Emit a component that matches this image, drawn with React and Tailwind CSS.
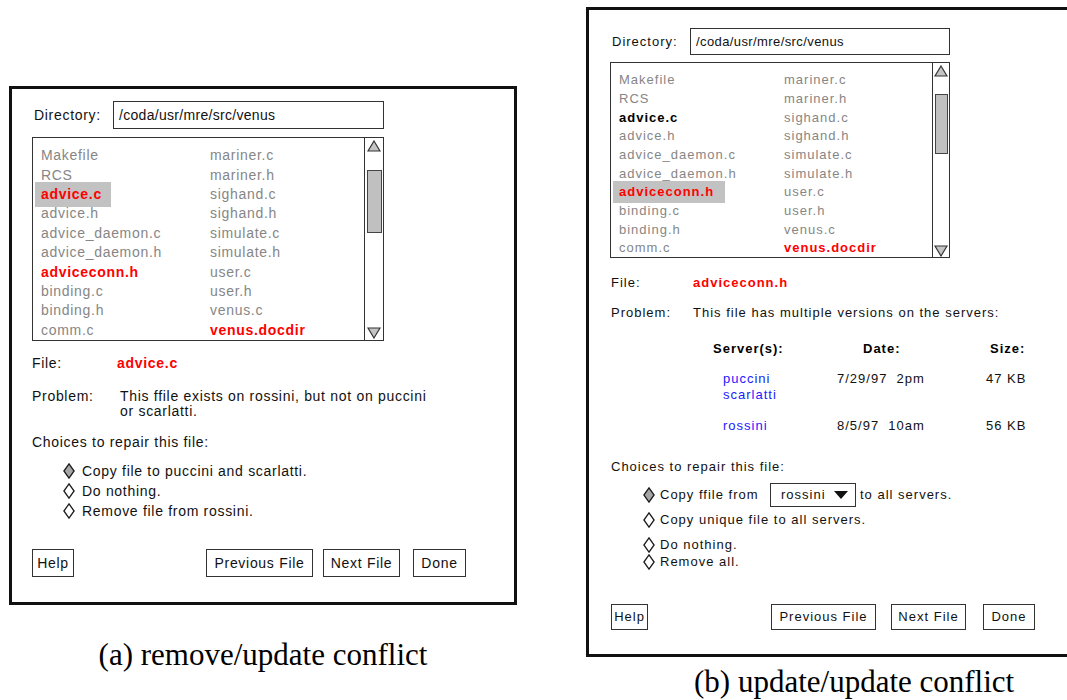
import React from "react";

const col2 = [
  { t: "mariner.c" },
  { t: "mariner.h" },
  { t: "sighand.c" },
  { t: "sighand.h" },
  { t: "simulate.c" },
  { t: "simulate.h" },
  { t: "user.c" },
  { t: "user.h" },
  { t: "venus.c" },
  { t: "venus.docdir", red: true },
];

const colA = [
  { t: "Makefile" },
  { t: "RCS" },
  { t: "advice.c", red: true, hl: true },
  { t: "advice.h" },
  { t: "advice_daemon.c" },
  { t: "advice_daemon.h" },
  { t: "adviceconn.h", red: true },
  { t: "binding.c" },
  { t: "binding.h" },
  { t: "comm.c" },
];

const colB = [
  { t: "Makefile" },
  { t: "RCS" },
  { t: "advice.c", black: true },
  { t: "advice.h" },
  { t: "advice_daemon.c" },
  { t: "advice_daemon.h" },
  { t: "adviceconn.h", red: true, hl: true },
  { t: "binding.c" },
  { t: "binding.h" },
  { t: "comm.c" },
];

function Diamond({ filled }) {
  return (
    <svg width="12" height="16" viewBox="0 0 12 16" className="shrink-0">
      <polygon
        points="6,0.9 11.1,8 6,15.1 0.9,8"
        fill={filled ? "#a6a6a6" : "#ffffff"}
        stroke="#1a1a1a"
        strokeWidth="1.3"
      />
    </svg>
  );
}

function UpArrow() {
  return (
    <svg width="14" height="12" viewBox="0 0 14 12" className="mx-auto shrink-0">
      <polygon points="7,1 13,11 1,11" fill="#c4c4c4" stroke="#333" strokeWidth="1.2" />
    </svg>
  );
}

function DownArrow() {
  return (
    <svg width="14" height="12" viewBox="0 0 14 12" className="mx-auto shrink-0">
      <polygon points="7,11 13,1 1,1" fill="#c4c4c4" stroke="#333" strokeWidth="1.2" />
    </svg>
  );
}

function Item({ f, hlClass }) {
  if (f.hl) {
    return (
      <span className={hlClass + " font-bold text-[#ff0000] bg-[#c2c2c2] inline-flex items-center"}>
        {f.t}
      </span>
    );
  }
  if (f.red) return <span className="font-bold text-[#ff0000]">{f.t}</span>;
  if (f.black) return <span className="font-bold text-black">{f.t}</span>;
  return <span className="text-[#868686]">{f.t}</span>;
}

function Btn({ cls, children }) {
  return (
    <div className={cls + " border border-[#333] flex items-center justify-center text-[#111]"}>
      {children}
    </div>
  );
}

export default function App() {
  return (
    <div className="w-[1067px] h-[700px] overflow-hidden bg-white flex font-['Liberation_Sans',Arial,sans-serif] text-[#111]">
      {/* Left (a) */}
      <div className="ml-[9px] mt-[86px] w-[508px] shrink-0 flex flex-col">
        <div className="w-[508px] h-[519px] border-[3px] border-[#111] flex flex-col pl-[20px] text-[14px] tracking-[0.7px]">
          <div className="mt-[12px] flex items-center h-[28px]">
            <span className="ml-[2px] w-[79px]">Directory:</span>
            <div className="w-[271px] h-[28px] border border-[#333] flex items-center pl-[5px] tracking-[0.3px]">
              /coda/usr/mre/src/venus
            </div>
          </div>
          <div className="mt-[8px] w-[352px] h-[204px] border border-[#333] flex">
            <div className="flex-1 pt-[8px] pl-[8px] flex flex-col">
              {colA.map((f, i) => (
                <div key={i} className="h-[19.4px] flex items-center">
                  <div className="w-[169px] flex items-center">
                    <Item f={f} hlClass="h-[25px] -my-[3px] -ml-[6px] pl-[6px] w-[76px]" />
                  </div>
                  <Item f={col2[i]} />
                </div>
              ))}
            </div>
            <div className="w-[19px] border-l border-[#333] flex flex-col pt-[2px] pb-[1px]">
              <UpArrow />
              <div className="mt-[18px] mx-auto w-[15px] h-[63px] border border-[#444] bg-[#c0c0c0]" />
              <div className="mt-auto">
                <DownArrow />
              </div>
            </div>
          </div>

          <div className="mt-[14px] h-[17px] flex items-center">
            <span className="w-[85px]">File:</span>
            <span className="font-bold text-[#ff0000]">advice.c</span>
          </div>
          <div className="mt-[17px] flex leading-[15px]">
            <span className="w-[88px] shrink-0">Problem:</span>
            <div className="flex flex-col">
              <span>This ffile exists on rossini, but not on puccini</span>
              <span>or scarlatti.</span>
            </div>
          </div>
          <div className="mt-[15px] h-[17px] flex items-center">Choices to repair this file:</div>
          <div className="mt-[10px] ml-[31px] flex flex-col">
            <div className="h-[20px] flex items-center gap-[7px]">
              <Diamond filled />
              <span>Copy file to puccini and scarlatti.</span>
            </div>
            <div className="h-[20px] flex items-center gap-[7px]">
              <Diamond />
              <span>Do nothing.</span>
            </div>
            <div className="h-[20px] flex items-center gap-[7px]">
              <Diamond />
              <span>Remove file from rossini.</span>
            </div>
          </div>
          <div className="mt-[28px] flex h-[28px]">
            <Btn cls="w-[42px]">Help</Btn>
            <Btn cls="ml-[132px] w-[107px]">Previous File</Btn>
            <Btn cls="ml-[10px] w-[77px]">Next File</Btn>
            <Btn cls="ml-[13px] w-[53px]">Done</Btn>
          </div>
        </div>
        <div className="mt-[32px] text-center leading-[36px] text-[31px] font-['Liberation_Serif','Times_New_Roman',serif] text-black">
          (a) remove/update conflict
        </div>
      </div>

      {/* Right (b) */}
      <div className="ml-[69px] mt-[7px] w-[500px] shrink-0 flex flex-col">
        <div className="w-[500px] h-[651px] border-[3px] border-[#111] flex flex-col pl-[21px] text-[13px] tracking-[1px]">
          <div className="mt-[18px] flex items-center h-[27px]">
            <span className="ml-[2px] w-[78px]">Directory:</span>
            <div className="w-[260px] h-[27px] border border-[#333] flex items-center pl-[5px] tracking-[0.4px]">
              /coda/usr/mre/src/venus
            </div>
          </div>
          <div className="mt-[7px] w-[340px] h-[196px] border border-[#333] flex">
            <div className="flex-1 pt-[7.7px] pl-[8px] flex flex-col">
              {colB.map((f, i) => (
                <div key={i} className="h-[18.7px] flex items-center">
                  <div className="w-[165px] flex items-center">
                    <Item f={f} hlClass="h-[22px] -my-[2px] -ml-[6px] pl-[6px] w-[112px]" />
                  </div>
                  <Item f={col2[i]} />
                </div>
              ))}
            </div>
            <div className="w-[17px] border-l border-[#333] flex flex-col pt-[2px] pb-[0px]">
              <UpArrow />
              <div className="mt-[17px] mx-auto w-[13px] h-[60px] border border-[#444] bg-[#c0c0c0]" />
              <div className="mt-auto">
                <DownArrow />
              </div>
            </div>
          </div>

          <div className="ml-[1px] flex flex-col">
            <div className="mt-[17px] h-[16px] flex items-center">
              <span className="w-[82px]">File:</span>
              <span className="font-bold text-[#ff0000]">adviceconn.h</span>
            </div>
            <div className="mt-[14px] h-[16px] flex items-center">
              <span className="w-[82px]">Problem:</span>
              <span>This file has multiple versions on the servers:</span>
            </div>
            <div className="mt-[20px] h-[16px] flex items-center ml-[102px] font-bold text-black">
              <span className="w-[150px]">Server(s):</span>
              <span className="w-[127px]">Date:</span>
              <span>Size:</span>
            </div>
            <div className="mt-[14px] flex ml-[112px] leading-[16px]">
              <div className="w-[114px] flex flex-col text-[#1a1aff]">
                <span>puccini</span>
                <span>scarlatti</span>
              </div>
              <span className="w-[149px]">7/29/97&nbsp;&nbsp;2pm</span>
              <span>47 KB</span>
            </div>
            <div className="mt-[15px] flex ml-[112px] leading-[16px]">
              <div className="w-[114px] text-[#1a1aff]">rossini</div>
              <span className="w-[149px]">8/5/97&nbsp;&nbsp;10am</span>
              <span>56 KB</span>
            </div>
            <div className="mt-[25px] h-[16px] flex items-center">Choices to repair this file:</div>
            <div className="ml-[32px] flex flex-col">
              <div className="mt-[8px] h-[24px] flex items-center">
                <Diamond filled />
                <span className="ml-[5px] w-[110px]">Copy ffile from</span>
                <div className="w-[86px] h-[24px] border border-[#333] flex items-center pl-[10px]">
                  <span>rossini</span>
                  <svg width="16" height="10" viewBox="0 0 16 10" className="ml-[7px]">
                    <polygon points="1,1 15,1 8,9" fill="#111" />
                  </svg>
                </div>
                <span className="ml-[4px]">to all servers.</span>
              </div>
              <div className="mt-[5px] h-[16px] flex items-center">
                <Diamond />
                <span className="ml-[5px]">Copy unique file to all servers.</span>
              </div>
              <div className="mt-[9px] h-[16px] flex items-center">
                <Diamond />
                <span className="ml-[5px]">Do nothing.</span>
              </div>
              <div className="mt-[1px] h-[16px] flex items-center">
                <Diamond />
                <span className="ml-[5px]">Remove all.</span>
              </div>
            </div>
            <div className="mt-[34px] flex h-[26px]">
              <Btn cls="w-[37px]">Help</Btn>
              <Btn cls="ml-[123px] w-[105px]">Previous File</Btn>
              <Btn cls="ml-[15px] w-[75px]">Next File</Btn>
              <Btn cls="ml-[17px] w-[52px]">Done</Btn>
            </div>
          </div>
        </div>
        <div className="mt-[7px] pl-[108px] leading-[36px] text-[31px] font-['Liberation_Serif','Times_New_Roman',serif] text-black whitespace-nowrap">
          (b) update/update conflict
        </div>
      </div>
    </div>
  );
}
